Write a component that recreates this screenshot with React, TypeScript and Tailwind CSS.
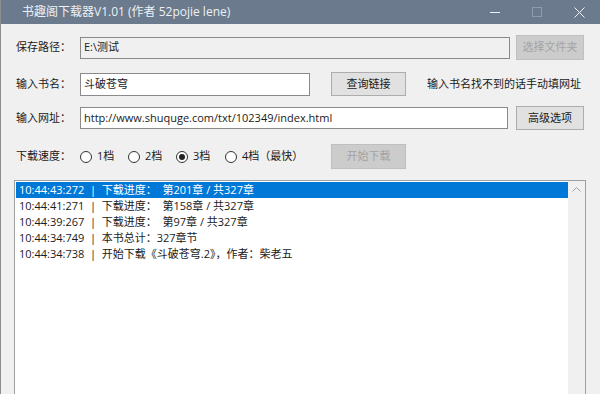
import React from 'react';

const font = { fontFamily: '"Segoe UI", "Open Sans", "Noto Sans CJK SC", sans-serif' };

const logs = [
  { t: '10:44:43:272', msg: '下载进度：  第201章 / 共327章', sel: true },
  { t: '10:44:41:271', msg: '下载进度：  第158章 / 共327章' },
  { t: '10:44:39:267', msg: '下载进度：  第97章 / 共327章' },
  { t: '10:44:34:749', msg: '本书总计：327章节' },
  { t: '10:44:34:738', msg: '开始下载《斗破苍穹.2》，作者：柴老五' },
];

function Radio({ label, checked, w }: { label: string; checked?: boolean; w: string }) {
  return (
    <div className={`flex items-center gap-[5px] ${w}`}>
      <span className="w-[12px] h-[12px] rounded-full border border-[#333] bg-white flex items-center justify-center">
        {checked && <span className="w-[6px] h-[6px] rounded-full bg-[#222]" />}
      </span>
      <span>{label}</span>
    </div>
  );
}

export default function App() {
  return (
    <div className="w-[600px] h-[394px] overflow-hidden bg-[#f0f0f0] border-l border-[#8d8d8d] text-[11px] text-[#1a1a1a]" style={font}>
      {/* title bar */}
      <div className="h-[24px] bg-[#6b7a8c] flex items-center text-[#eef1f4] text-[12px]">
        <span className="pl-[21px]">书趣阁下载器V1.01 (作者 52pojie lene)</span>
        <div className="ml-auto flex items-center h-full">
          <div className="w-[42px] h-full flex items-center justify-center">
            <span className="w-[10px] h-px bg-[#eef1f4]" />
          </div>
          <div className="w-[42px] h-full flex items-center justify-center">
            <span className="w-[10px] h-[10px] border border-[#8f9bab]" />
          </div>
          <div className="w-[42px] h-full flex items-center justify-center">
            <svg width="11" height="11" viewBox="0 0 11 11" stroke="#eef1f4" strokeWidth="1">
              <path d="M0.5 0.5L10.5 10.5M10.5 0.5L0.5 10.5" />
            </svg>
          </div>
        </div>
      </div>

      <div className="pl-[15px] pr-[15px]">
        {/* row 1 */}
        <div className="mt-[11px] h-[25px] flex items-center">
          <span className="w-[64px]">保存路径：</span>
          <div className="w-[430px] h-[22px] border border-[#8a8a8a] bg-[#f0f0f0] flex items-center px-[3px]">E:\测试</div>
          <button className="ml-[6px] w-[68px] h-[25px] bg-[#cccccc] border border-[#bfbfbf] text-[#a3a3a3]">选择文件夹</button>
        </div>

        {/* row 2 */}
        <div className="mt-[12px] h-[24px] flex items-center">
          <span className="w-[64px]">输入书名：</span>
          <div className="w-[230px] h-[23px] border border-[#8a8a8a] bg-white flex items-center px-[3px]">斗破苍穹</div>
          <button className="ml-[21px] w-[75px] h-[24px] bg-[#e1e1e1] border border-[#adadad]">查询链接</button>
          <span className="ml-[21px]">输入书名找不到的话手动填网址</span>
        </div>

        {/* row 3 */}
        <div className="mt-[10px] h-[24px] flex items-center">
          <span className="w-[64px]">输入网址：</span>
          <div className="w-[428px] h-[22px] border border-[#8a8a8a] bg-white flex items-center px-[3px]">http://www.shuquge.com/txt/102349/index.html</div>
          <button className="ml-[8px] w-[68px] h-[24px] bg-[#e1e1e1] border border-[#adadad]">高级选项</button>
        </div>

        {/* row 4 */}
        <div className="mt-[14px] h-[25px] flex items-center">
          <span className="w-[64px]">下载速度：</span>
          <div className="flex items-center w-[251px]">
            <Radio label="1档" w="w-[48px]" />
            <Radio label="2档" w="w-[48px]" />
            <Radio label="3档" w="w-[49px]" checked />
            <Radio label="4档（最快）" w="w-[100px]" />
          </div>
          <button className="w-[75px] h-[25px] bg-[#cccccc] border border-[#bfbfbf] text-[#a3a3a3]">开始下载</button>
        </div>

        {/* log list */}
        <div className="mt-[11px] -ml-[2px] w-[572px] h-[300px] border border-[#a0a0a0] bg-white flex">
          <div className="flex-1 pt-px pl-px">
            {logs.map((l) => (
              <div
                key={l.t}
                className={`h-[16px] leading-[16px] pl-[3px] whitespace-pre ${l.sel ? 'bg-[#0078d7] text-white' : ''}`}
              >
                {l.t + '  |  ' + l.msg}
              </div>
            ))}
          </div>
          <div className="w-[17px] bg-[#f0f0f0] flex justify-center pt-[6px]">
            <svg width="9" height="5" viewBox="0 0 9 5" fill="none" stroke="#a0a0a0" strokeWidth="1">
              <path d="M0.5 4.5L4.5 0.5L8.5 4.5" />
            </svg>
          </div>
        </div>
      </div>
    </div>
  );
}
